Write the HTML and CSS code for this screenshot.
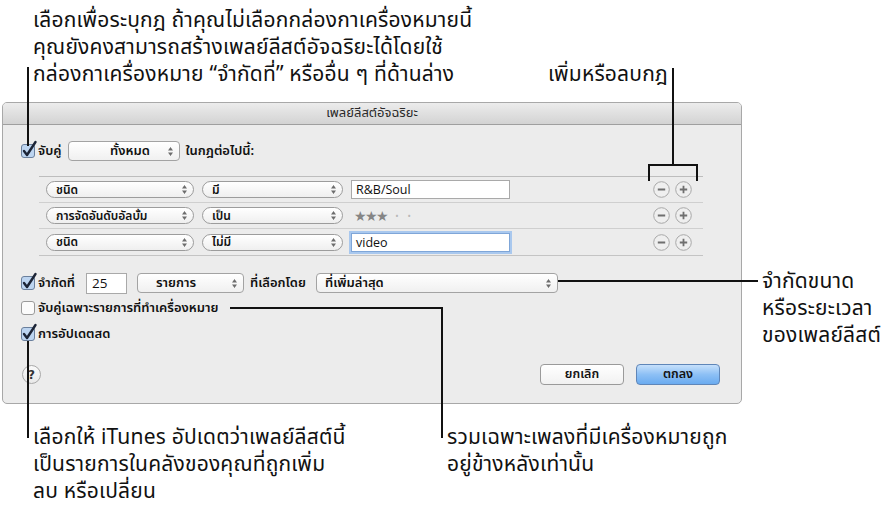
FILE: index.html
```html
<!DOCTYPE html>
<html lang="th">
<head>
<meta charset="utf-8">
<title>เพลย์ลีสต์อัจฉริยะ</title>
<link rel="stylesheet" href="styles.css">
</head>
<body>
<div class="page">
  <div class="top-notes">
    <div class="note note-match"><p class="ln">เลือกเพื่อระบุกฎ ถ้าคุณไม่เลือกกล่องกาเครื่องหมายนี้</p><p class="ln">คุณยังคงสามารถสร้างเพลย์ลีสต์อัจฉริยะได้โดยใช้</p><p class="ln">กล่องกาเครื่องหมาย “จำกัดที่” หรืออื่น ๆ ที่ด้านล่าง</p></div>
    <div class="note note-rules"><p class="ln">เพิ่มหรือลบกฎ</p></div>
  </div>

  <div class="middle">
    <div class="dialog">
      <div class="titlebar">เพลย์ลีสต์อัจฉริยะ</div>
      <div class="dialog-body">
        <div class="row row-match">
          <svg class="check" width="16" height="16" viewBox="0 0 16 16"><rect x="0.5" y="1.5" width="13" height="13" rx="2.5" class="box-on"/><path d="M3 8 L6 12 L14.5 -1" class="tick"/></svg>
          <span class="label">จับคู่</span>
          <span class="popup popup-all"><span class="popup-text">ทั้งหมด</span><svg class="arrows" width="5" height="9" viewBox="0 0 5 9"><path d="M0 3.6 L2.5 0 L5 3.6Z M0 5.4 L2.5 9 L5 5.4Z"/></svg></span>
          <span class="label label-gap">ในกฎต่อไปนี้:</span>
        </div>

        <div class="rules">
          <div class="rule">
            <span class="pill pill-field"><span class="pill-text">ชนิด</span><svg class="arrows" width="5" height="9" viewBox="0 0 5 9"><path d="M0 3.6 L2.5 0 L5 3.6Z M0 5.4 L2.5 9 L5 5.4Z"/></svg></span>
            <span class="pill pill-op"><span class="pill-text">มี</span><svg class="arrows" width="5" height="9" viewBox="0 0 5 9"><path d="M0 3.6 L2.5 0 L5 3.6Z M0 5.4 L2.5 9 L5 5.4Z"/></svg></span>
            <span class="field field-rule">R&amp;B/Soul</span>
            <span class="pm"><svg class="pm-btn" width="17" height="17" viewBox="0 0 17 17"><circle cx="8.5" cy="8.5" r="7.8"/><path d="M4.8 8.5 H12.2"/></svg><svg class="pm-btn" width="17" height="17" viewBox="0 0 17 17"><circle cx="8.5" cy="8.5" r="7.8"/><path d="M4.8 8.5 H12.2 M8.5 4.8 V12.2"/></svg></span>
          </div>
          <div class="rule">
            <span class="pill pill-field"><span class="pill-text">การจัดอันดับอัลบั้ม</span><svg class="arrows" width="5" height="9" viewBox="0 0 5 9"><path d="M0 3.6 L2.5 0 L5 3.6Z M0 5.4 L2.5 9 L5 5.4Z"/></svg></span>
            <span class="pill pill-op"><span class="pill-text">เป็น</span><svg class="arrows" width="5" height="9" viewBox="0 0 5 9"><path d="M0 3.6 L2.5 0 L5 3.6Z M0 5.4 L2.5 9 L5 5.4Z"/></svg></span>
            <span class="stars"><span class="star-on">★★★</span><span class="star-off">•</span><span class="star-off">•</span></span>
            <span class="pm"><svg class="pm-btn" width="17" height="17" viewBox="0 0 17 17"><circle cx="8.5" cy="8.5" r="7.8"/><path d="M4.8 8.5 H12.2"/></svg><svg class="pm-btn" width="17" height="17" viewBox="0 0 17 17"><circle cx="8.5" cy="8.5" r="7.8"/><path d="M4.8 8.5 H12.2 M8.5 4.8 V12.2"/></svg></span>
          </div>
          <div class="rule rule-last">
            <span class="pill pill-field"><span class="pill-text">ชนิด</span><svg class="arrows" width="5" height="9" viewBox="0 0 5 9"><path d="M0 3.6 L2.5 0 L5 3.6Z M0 5.4 L2.5 9 L5 5.4Z"/></svg></span>
            <span class="pill pill-op"><span class="pill-text">ไม่มี</span><svg class="arrows" width="5" height="9" viewBox="0 0 5 9"><path d="M0 3.6 L2.5 0 L5 3.6Z M0 5.4 L2.5 9 L5 5.4Z"/></svg></span>
            <span class="field field-rule field-focus">video</span>
            <span class="pm"><svg class="pm-btn" width="17" height="17" viewBox="0 0 17 17"><circle cx="8.5" cy="8.5" r="7.8"/><path d="M4.8 8.5 H12.2"/></svg><svg class="pm-btn" width="17" height="17" viewBox="0 0 17 17"><circle cx="8.5" cy="8.5" r="7.8"/><path d="M4.8 8.5 H12.2 M8.5 4.8 V12.2"/></svg></span>
          </div>
        </div>

        <div class="row row-limit">
          <svg class="check" width="16" height="16" viewBox="0 0 16 16"><rect x="0.5" y="1.5" width="13" height="13" rx="2.5" class="box-on"/><path d="M3 8 L6 12 L14.5 -1" class="tick"/></svg>
          <span class="label label-limit">จำกัดที่</span>
          <span class="field field-num">25</span>
          <span class="popup popup-unit"><span class="popup-text">รายการ</span><svg class="arrows" width="5" height="9" viewBox="0 0 5 9"><path d="M0 3.6 L2.5 0 L5 3.6Z M0 5.4 L2.5 9 L5 5.4Z"/></svg></span>
          <span class="label label-by">ที่เลือกโดย</span>
          <span class="popup popup-sel"><span class="popup-text">ที่เพิ่มล่าสุด</span><svg class="arrows" width="5" height="9" viewBox="0 0 5 9"><path d="M0 3.6 L2.5 0 L5 3.6Z M0 5.4 L2.5 9 L5 5.4Z"/></svg></span>
        </div>

        <div class="row row-opt">
          <svg class="check" width="16" height="16" viewBox="0 0 16 16"><rect x="0.5" y="1.5" width="13" height="13" rx="2.5" class="box-off"/></svg>
          <span class="label">จับคู่เฉพาะรายการที่ทำเครื่องหมาย</span>
        </div>

        <div class="row row-opt">
          <svg class="check" width="16" height="16" viewBox="0 0 16 16"><rect x="0.5" y="1.5" width="13" height="13" rx="2.5" class="box-on"/><path d="M3 8 L6 12 L14.5 -1" class="tick"/></svg>
          <span class="label">การอัปเดตสด</span>
        </div>

        <div class="footer">
          <span class="help">?</span>
          <span class="btn btn-cancel">ยกเลิก</span>
          <span class="btn btn-ok">ตกลง</span>
        </div>
      </div>
    </div>
    <div class="note note-limit"><p class="ln">จำกัดขนาด</p><p class="ln">หรือระยะเวลา</p><p class="ln">ของเพลย์ลีสต์</p></div>
  </div>

  <div class="bottom-notes">
    <div class="note note-live"><p class="ln">เลือกให้ iTunes อัปเดตว่าเพลย์ลีสต์นี้</p><p class="ln">เป็นรายการในคลังของคุณที่ถูกเพิ่ม</p><p class="ln">ลบ หรือเปลี่ยน</p></div>
    <div class="note note-checked"><p class="ln">รวมเฉพาะเพลงที่มีเครื่องหมายถูก</p><p class="ln">อยู่ข้างหลังเท่านั้น</p></div>
  </div>

  <div class="lead lead-match"></div>
  <div class="lead lead-rules"></div>
  <div class="lead lead-bracket"></div>
  <div class="lead lead-limit"></div>
  <div class="lead lead-checked-h"></div>
  <div class="lead lead-checked-v"></div>
  <div class="lead lead-live"></div>
</div>
</body>
</html>
```

FILE: styles.css
```css
* { box-sizing: border-box; }
html, body { margin: 0; padding: 0; background: #fff; }
.page {
  position: relative;
  width: 884px;
  height: 506px;
  overflow: hidden;
  background: #fff;
  font-family: "Noto Sans Thai", "Noto Sans", "DejaVu Sans", sans-serif;
  color: #111;
}
p { margin: 0; }

.note {
  font-size: 21px;
  letter-spacing: 0.2px;
  line-height: 27px;
  color: #111;
  white-space: nowrap;
}
.ln { height: 27px; }

.top-notes { display: flex; height: 102px; }
.note-match { margin: 7px 0 0 33px; width: 515px; }
.note-rules { margin-top: 61px; }

.middle { display: flex; align-items: flex-start; height: 302px; }
.dialog {
  margin-left: 2px;
  width: 740px;
  height: 302px;
  border: 1px solid #a8a8a8;
  border-radius: 5px;
  background: #ececec;
  overflow: hidden;
  font-size: 13px;
  color: #111;
}
.note-limit { margin: 166px 0 0 20px; }

.titlebar {
  height: 22px;
  border-bottom: 1px solid #9f9f9f;
  background: linear-gradient(#ececec, #d3d3d3);
  text-align: center;
  line-height: 21px;
  font-size: 13px;
  color: #2a2a2a;
}

.dialog-body { padding: 16px 21px 0 18px; }

.row { display: flex; align-items: center; }
.row-match { height: 20px; }
.check { flex: none; overflow: visible; }
.box-on { fill: #bcd4f0; stroke: #6a7f9c; stroke-width: 1; }
.box-off { fill: #fbfbfb; stroke: #9a9a9a; stroke-width: 1; }
.tick { fill: none; stroke: #1c2436; stroke-width: 2.4; stroke-linecap: round; stroke-linejoin: round; }
.label { margin-left: 1px; font-weight: 600; white-space: nowrap; }
.label-gap { margin-left: 5px; }
.label-limit { width: 44px; }

.popup {
  display: flex;
  align-items: center;
  height: 20px;
  border: 1px solid #a3a3a3;
  border-radius: 4px;
  background: linear-gradient(#ffffff, #f0f0f0);
  padding: 0 6px 0 10px;
  font-weight: 600;
}
.popup-text { flex: 1; white-space: nowrap; }
.arrows { flex: none; fill: #6d6d6d; }
.popup-all { margin-left: 7px; width: 112px; }
.popup-all .popup-text { text-align: center; padding-left: 12px; }
.popup-unit { margin-left: 10px; width: 107px; }
.popup-unit .popup-text { padding-left: 8px; }
.popup-sel { margin-left: 6px; width: 242px; padding-left: 8px; }
.label-by { margin-left: 6px; width: 60px; }

.rules {
  margin: 15px 0 0 18px;
  width: 664px;
  border-top: 1px solid #bdbdbd;
}
.rule {
  display: flex;
  align-items: center;
  height: 26px;
  padding: 0 11px 0 7px;
  border-bottom: 1px solid #cfcfcf;
}
.rule-last { height: 27px; border-bottom-color: #c4c4c4; }
.pill {
  display: flex;
  align-items: center;
  height: 17px;
  border: 1px solid #9c9c9c;
  border-radius: 9px;
  background: linear-gradient(#ffffff, #efefef);
  padding: 0 6px 0 9px;
  font-size: 12px;
  font-weight: 600;
}
.pill-text { flex: 1; white-space: nowrap; }
.pill-field { width: 148px; }
.pill-op { width: 141px; margin-left: 8px; }
.field {
  display: flex;
  align-items: center;
  background: #fff;
  border: 1px solid #a9a9a9;
  font-family: "Open Sans", "DejaVu Sans", sans-serif;
  font-size: 12.5px;
  color: #111;
}
.field-rule { width: 159px; height: 19px; margin-left: 8px; padding-left: 4px; }
.field-focus { border-color: #7fa6d8; box-shadow: 0 0 0 2px #a9c8ee; }
.field-num { width: 41px; height: 21px; margin-left: 4px; padding-left: 5px; font-size: 13.5px; }
.stars { margin-left: 11px; display: flex; align-items: center; }
.star-on { color: #858585; font-size: 14px; letter-spacing: -1.5px; font-family: "DejaVu Sans", sans-serif; }
.star-off { color: #b8b8b8; font-size: 9px; margin-left: 8px; }
.star-off + .star-off { margin-left: 9px; }

.pm { margin-left: auto; display: flex; gap: 5px; }
.pm-btn circle { fill: #efefef; stroke: #a8a8a8; stroke-width: 1; }
.pm-btn path { stroke: #6f6f6f; stroke-width: 1.8; fill: none; }

.row-limit { margin-top: 16px; height: 22px; }
.row-opt { margin-top: 8px; height: 18px; }
.row-limit + .row-opt { margin-top: 5px; }

.footer { display: flex; align-items: center; margin-top: 21px; height: 21px; }
.help {
  width: 19px; height: 19px; margin-left: 1px;
  border: 1px solid #a9a9a9; border-radius: 50%;
  background: linear-gradient(#fafafa, #e9e9e9);
  display: flex; align-items: center; justify-content: center;
  font-family: "DejaVu Sans", sans-serif; font-weight: bold; font-size: 12px; color: #333;
}
.btn {
  display: flex; align-items: center; justify-content: center;
  width: 84px; height: 21px;
  border: 1px solid #9a9a9a; border-radius: 4px;
  font-weight: 600; font-size: 12.5px;
}
.btn-cancel { margin-left: auto; background: linear-gradient(#ffffff, #f1f1f1); }
.btn-ok { margin-left: 12px; background: linear-gradient(#c6e0fb, #8dc0f5 50%, #6aabf0); border-color: #5f86b8; }

.bottom-notes { display: flex; margin-top: 20px; }
.note-live { margin-left: 33px; width: 414px; }

.lead { position: absolute; background: #111; }
.lead-match { left: 27px; top: 67px; width: 2px; height: 79px; }
.lead-rules { left: 672px; top: 68px; width: 2px; height: 98px; }
.lead-bracket { left: 648px; top: 164px; width: 50px; height: 17px; background: transparent; border: 2px solid #111; border-bottom: 0; }
.lead-limit { left: 558px; top: 280px; width: 200px; height: 2px; }
.lead-checked-h { left: 230px; top: 307px; width: 213px; height: 2px; }
.lead-checked-v { left: 441px; top: 307px; width: 2px; height: 131px; }
.lead-live { left: 27px; top: 341px; width: 2px; height: 97px; }
```
